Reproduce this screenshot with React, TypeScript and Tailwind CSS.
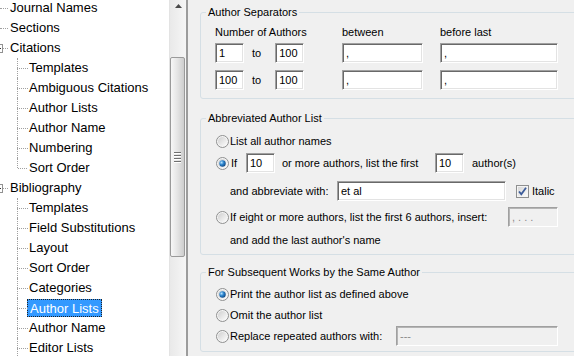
import React from 'react'

const dots = 'border-dotted border-[#a0a0a0]'

function Radio({ checked }: { checked?: boolean }) {
  return (
    <svg width="13" height="13" viewBox="0 0 13 13" className="shrink-0">
      <defs>
        <linearGradient id="rbg" x1="0" y1="0" x2="1" y2="1">
          <stop offset="0" stopColor="#cfcfcf" />
          <stop offset="1" stopColor="#fdfdfd" />
        </linearGradient>
        <radialGradient id="rdot" cx="0.35" cy="0.35" r="0.75">
          <stop offset="0" stopColor="#b6e3ff" />
          <stop offset="0.45" stopColor="#2b83cc" />
          <stop offset="1" stopColor="#0b3f78" />
        </radialGradient>
      </defs>
      <circle cx="6.5" cy="6.5" r="6" fill="#f6f6f6" stroke="#8e8f8f" />
      <circle cx="6.5" cy="6.5" r="4.6" fill="url(#rbg)" />
      {checked && <circle cx="6.5" cy="6.5" r="3.2" fill="url(#rdot)" />}
    </svg>
  )
}

function Check() {
  return (
    <svg width="13" height="13" viewBox="0 0 13 13" className="shrink-0">
      <defs>
        <linearGradient id="cbg" x1="0" y1="0" x2="1" y2="1">
          <stop offset="0" stopColor="#d6d6d6" />
          <stop offset="1" stopColor="#fbfbfb" />
        </linearGradient>
      </defs>
      <rect x="0.5" y="0.5" width="12" height="12" fill="#f4f4f4" stroke="#8e8f8f" />
      <rect x="2" y="2" width="9" height="9" fill="url(#cbg)" />
      <path d="M3 6.5 L5.3 9.2 L10 2.8" fill="none" stroke="#3c5c9a" strokeWidth="1.8" />
    </svg>
  )
}

function TextBox({
  value,
  width,
  disabled,
  className = '',
}: {
  value: string
  width: string
  disabled?: boolean
  className?: string
}) {
  return (
    <div
      className={`flex h-[20px] shrink-0 items-center border border-t-[#a0a0a0] border-l-[#a0a0a0] border-r-white border-b-white pl-[3px] ${width} ${
        disabled
          ? 'bg-[#f0f0f0] text-[#8a8a8a] shadow-[inset_1px_1px_0_#b5b5b5]'
          : 'bg-white shadow-[inset_1px_1px_0_#696969,inset_-1px_-1px_0_#e3e3e3]'
      } ${className}`}
    >
      {value}
    </div>
  )
}

function Group({
  title,
  className,
  children,
}: {
  title: string
  className: string
  children: React.ReactNode
}) {
  return (
    <div className={`relative w-[400px] shrink-0 rounded-[3px] border border-[#d5dfe5] ${className}`}>
      <span className="absolute -top-[7px] left-[5px] bg-[#f0f0f0] px-[2px] leading-[13px]">{title}</span>
      {children}
    </div>
  )
}

function TopRow({ label, expander }: { label: string; expander?: boolean }) {
  return (
    <div className="flex h-[20px] items-center">
      {expander ? (
        <>
          <span className="-ml-[6px] flex h-[9px] w-[9px] shrink-0 items-center justify-center border border-[#919191] bg-white">
            <span className="h-px w-[5px] bg-[#333]" />
          </span>
          <span className={`h-0 w-[5px] border-t ${dots}`} />
        </>
      ) : (
        <span className={`h-0 w-[8px] border-t ${dots}`} />
      )}
      <span className="px-[2px]">{label}</span>
    </div>
  )
}

function ChildRow({ label, last, selected }: { label: string; last?: boolean; selected?: boolean }) {
  return (
    <div className="flex h-[20px]">
      <div className="ml-[17px] flex w-[10px] shrink-0 flex-col">
        <div className={`h-[10px] border-l ${dots}`} />
        <div className={`relative h-[10px] ${last ? '' : `border-l ${dots}`}`}>
          <div className={`ml-px h-0 w-[9px] border-t ${dots}`} />
        </div>
      </div>
      <div className="flex items-center">
        <span
          className={`h-[18px] px-[2px] leading-[17px] ${
            selected ? 'border border-dotted border-[#222] bg-[#3399ff] px-[1px] text-white' : ''
          }`}
        >
          {label}
        </span>
      </div>
    </div>
  )
}

export default function App() {
  return (
    <div className="flex h-[356px] w-[574px] overflow-hidden font-['Liberation_Sans',Arial,sans-serif] text-black">
      {/* tree */}
      <div className="w-[169px] shrink-0 overflow-hidden bg-white text-[13px]">
        <div className="-mt-[2px] flex flex-col">
          <TopRow label="Journal Names" />
          <TopRow label="Sections" />
          <TopRow label="Citations" expander />
          <ChildRow label="Templates" />
          <ChildRow label="Ambiguous Citations" />
          <ChildRow label="Author Lists" />
          <ChildRow label="Author Name" />
          <ChildRow label="Numbering" />
          <ChildRow label="Sort Order" last />
          <TopRow label="Bibliography" expander />
          <ChildRow label="Templates" />
          <ChildRow label="Field Substitutions" />
          <ChildRow label="Layout" />
          <ChildRow label="Sort Order" />
          <ChildRow label="Categories" />
          <ChildRow label="Author Lists" selected />
          <ChildRow label="Author Name" />
          <ChildRow label="Editor Lists" />
        </div>
      </div>

      {/* scrollbar */}
      <div className="flex w-[17px] shrink-0 flex-col border-l border-[#e3e3e3] bg-gradient-to-r from-[#e9e9e9] to-[#f6f6f6]">
        <div className="flex h-[12px] items-end justify-center pb-[4px]">
          <svg width="7" height="4" viewBox="0 0 7 4">
            <path d="M0 4 L3.5 0 L7 4 Z" fill="#4a4a4a" />
          </svg>
        </div>
        <div className="mt-[45px] flex h-[200px] w-[15px] items-center justify-center rounded-[2px] border border-[#9a9a9a] bg-gradient-to-r from-[#f7f7f7] via-[#e4e4e4] to-[#cdcdcd]">
          <div className="flex flex-col gap-[2px]">
            <span className="h-px w-[7px] bg-[#6f6f6f] shadow-[0_1px_0_#fff]" />
            <span className="h-px w-[7px] bg-[#6f6f6f] shadow-[0_1px_0_#fff]" />
            <span className="h-px w-[7px] bg-[#6f6f6f] shadow-[0_1px_0_#fff]" />
            <span className="h-px w-[7px] bg-[#6f6f6f] shadow-[0_1px_0_#fff]" />
          </div>
        </div>
      </div>

      {/* splitter */}
      <div className="w-[2px] shrink-0 bg-[#9c9c9c]" />

      {/* settings */}
      <div className="flex flex-1 flex-col overflow-hidden bg-[#f0f0f0] pl-[12px] text-[11px]">
        <Group title="Author Separators" className="mt-[12px] h-[87px]">
          <div className="flex pl-[14px] pt-[13px]">
            <div className="w-[127px] shrink-0">
              <div className="h-[13px] leading-[13px]">Number of Authors</div>
              <div className="mt-[4px] flex h-[20px] items-center">
                <TextBox value="1" width="w-[29px]" />
                <span className="ml-[8px]">to</span>
                <TextBox value="100" width="w-[29px]" className="ml-[14px]" />
              </div>
              <div className="mt-[7px] flex h-[20px] items-center">
                <TextBox value="100" width="w-[29px]" />
                <span className="ml-[8px]">to</span>
                <TextBox value="100" width="w-[29px]" className="ml-[14px]" />
              </div>
            </div>
            <div className="w-[98px] shrink-0">
              <div className="h-[13px] leading-[13px]">between</div>
              <TextBox value="," width="w-[81px]" className="mt-[4px]" />
              <TextBox value="," width="w-[81px]" className="mt-[7px]" />
            </div>
            <div className="shrink-0">
              <div className="h-[13px] leading-[13px]">before last</div>
              <TextBox value="," width="w-[118px]" className="mt-[4px]" />
              <TextBox value="," width="w-[118px]" className="mt-[7px]" />
            </div>
          </div>
        </Group>

        <Group title="Abbreviated Author List" className="mt-[19px] h-[137px]">
          <div className="flex flex-col pl-[15px] pt-[12px]">
            <div className="flex h-[20px] items-center">
              <Radio />
              <span className="ml-[1px]">List all author names</span>
            </div>
            <div className="mt-[2px] flex h-[20px] items-center">
              <Radio checked />
              <span className="ml-[2px] w-[15px] shrink-0">If</span>
              <TextBox value="10" width="w-[29px]" />
              <span className="ml-[7px] w-[153px] shrink-0">or more authors, list the first</span>
              <TextBox value="10" width="w-[29px]" />
              <span className="ml-[8px]">author(s)</span>
            </div>
            <div className="mt-[8px] flex h-[20px] items-center">
              <span className="ml-[14px] w-[107px] shrink-0">and abbreviate with:</span>
              <TextBox value="et al" width="w-[169px]" />
              <span className="ml-[10px] flex items-center">
                <Check />
              </span>
              <span className="ml-[3px]">Italic</span>
            </div>
            <div className="mt-[6px] flex h-[20px] items-center">
              <Radio />
              <span className="ml-[1px] w-[278px] shrink-0">If eight or more authors, list the first 6 authors, insert:</span>
              <TextBox value=", . . ." width="w-[50px]" disabled />
            </div>
            <div className="mt-[3px] flex h-[20px] items-center">
              <span className="ml-[14px]">and add the last author's name</span>
            </div>
          </div>
        </Group>

        <Group title="For Subsequent Works by the Same Author" className="mt-[17px] h-[80px]">
          <div className="flex flex-col pl-[15px] pt-[11px]">
            <div className="flex h-[20px] items-center">
              <Radio checked />
              <span className="ml-[1px]">Print the author list as defined above</span>
            </div>
            <div className="mt-[1px] flex h-[20px] items-center">
              <Radio />
              <span className="ml-[1px]">Omit the author list</span>
            </div>
            <div className="mt-[1px] flex h-[20px] items-center">
              <Radio />
              <span className="ml-[1px] w-[166px] shrink-0">Replace repeated authors with:</span>
              <TextBox value="---" width="w-[162px]" disabled />
            </div>
          </div>
        </Group>
      </div>
    </div>
  )
}
